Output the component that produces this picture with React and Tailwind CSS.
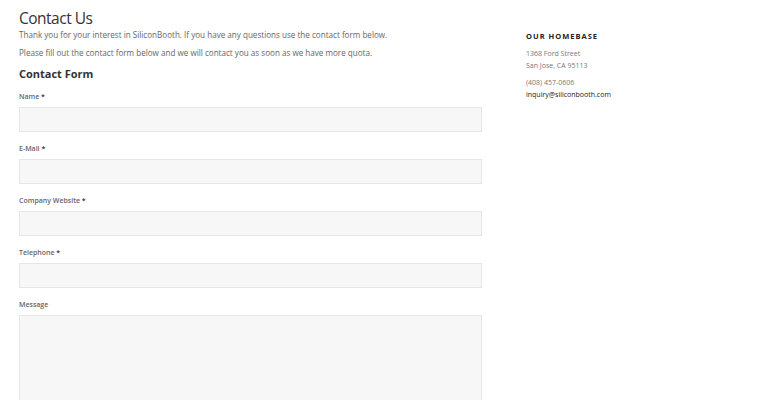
import React from 'react';

const Field = ({ label, required, tall }) => (
  <div className="flex flex-col">
    <label className="text-[7px] leading-[10px] font-semibold text-[#666] mb-[5px]">
      {label}
      {required && <span className="text-[#333]"> *</span>}
    </label>
    {tall ? (
      <textarea className="w-full h-[120px] bg-[#f7f7f7] border border-[#e6e6e6] resize-none" />
    ) : (
      <input className="w-full h-[25px] bg-[#f7f7f7] border border-[#e6e6e6]" />
    )}
  </div>
);

export default function App() {
  return (
    <div className="w-[760px] h-[400px] overflow-hidden bg-white font-['Open_Sans',sans-serif]">
      <div className="flex pl-[19px] pt-[7px]">
        <div className="w-[463px]">
          <h1 className="text-[15.5px] leading-[22px] tracking-[-0.5px] text-[#333]">Contact Us</h1>
          <p className="text-[8.1px] leading-[12px] text-[#666]">
            Thank you for your interest in SiliconBooth. If you have any questions use the contact form below.
          </p>
          <p className="text-[8.1px] leading-[12px] text-[#666] mt-[6px]">
            Please fill out the contact form below and we will contact you as soon as we have more quota.
          </p>
          <h2 className="text-[11px] leading-[16px] font-bold text-[#333] mt-[7px]">Contact Form</h2>
          <div className="flex flex-col gap-[12px] mt-[10px]">
            <Field label="Name" required />
            <Field label="E-Mail" required />
            <Field label="Company Website" required />
            <Field label="Telephone" required />
            <Field label="Message" tall />
          </div>
        </div>
        <div className="ml-[44px] pt-[24px]">
          <h3 className="text-[7.5px] leading-[10px] font-bold tracking-[1px] text-[#222]">OUR HOMEBASE</h3>
          <p className="text-[7px] leading-[12px] text-[#777] mt-[7px]">
            1368 Ford Street<br />San Jose, CA 95113
          </p>
          <p className="text-[7px] leading-[12px] text-[#777] mt-[5px]">(408) 457-0606</p>
          <p className="text-[7px] leading-[12px] text-[#222]">inquiry@siliconbooth.com</p>
        </div>
      </div>
    </div>
  );
}
